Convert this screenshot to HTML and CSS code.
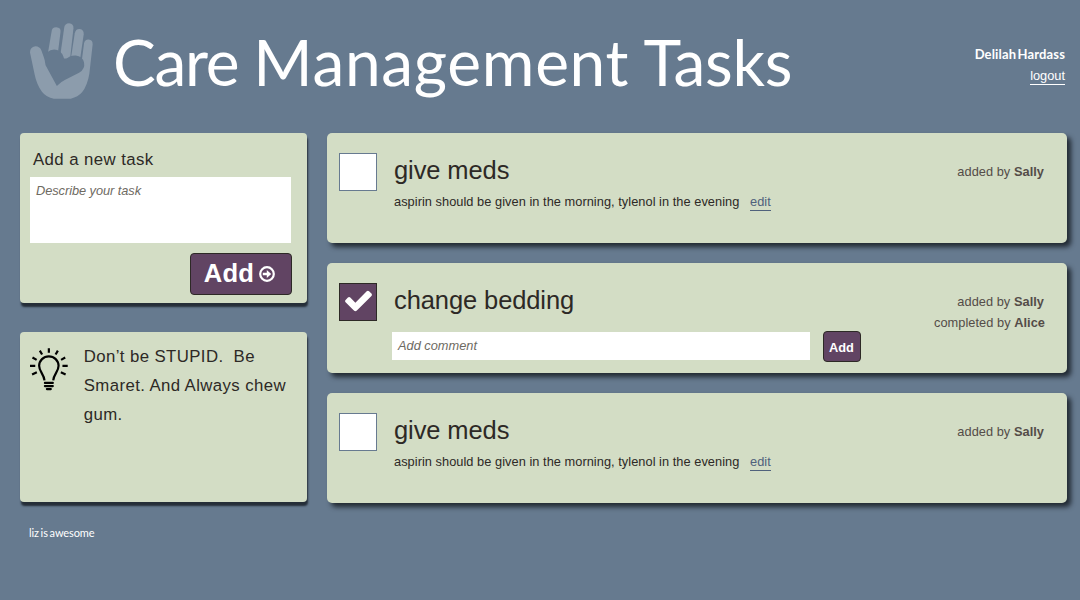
FILE: index.html
```html
<!DOCTYPE html>
<html lang="en">
<head>
<meta charset="utf-8">
<title>Care Management Tasks</title>
<link rel="stylesheet" href="styles.css">
</head>
<body>
<header class="header">
  <svg class="logo" viewBox="30 38 190 227" aria-hidden="true">
    <g class="logo-hand">
      <path d="M95 63Q96 50 109 50Q124 51 122 64L114 128L84 128Z"/>
      <path d="M133 52Q135 38 148 38Q162 40 161 53L151 144L120 144Z"/>
      <path d="M165 68Q168 54 180 55Q193 57 192 71L181 146L153 146Z"/>
      <path d="M30 126Q30 109 46 107Q60 107 65 121L77 155L100 160L185 160L193 98Q196 86 207 87Q219 88 219 101L209 190Q203 226 187 246Q175 260 153 265L102 265Q79 261 66 244Q50 222 44 192Z"/>
    </g>
    <path class="logo-heart" d="M111 227L77 164Q70 139 82 125Q94 114 112 118Q130 124 134 151Q148 134 168 135Q188 137 193 156Q197 176 178 187L135 209Q122 215 111 227Z"/>
  </svg>
  <h1 class="title"><span class="title-start">Care </span><span class="title-middle">Management</span> Tasks</h1>
  <div class="account">
    <div class="user">Delilah Hardass</div>
    <a class="link logout">logout</a>
  </div>
</header>
<main class="main">
  <aside class="sidebar">
    <section class="panel new-task">
      <h2 class="panel-title">Add a new task</h2>
      <div class="field describe">Describe your task</div>
      <button class="button add-task">Add
        <svg class="arrow" viewBox="0 0 16 16" aria-hidden="true"><circle cx="8" cy="8" r="6.8"/><path d="M3.8 6.8H7.8V4L12.2 8L7.8 12V9.2H3.8Z"/></svg>
      </button>
    </section>
    <section class="panel tip">
      <svg class="bulb" viewBox="0 0 38 43" aria-hidden="true">
        <path d="M14.6 32.5C14 26 9.2 23.5 9.2 17.8A9.8 9.6 0 0 1 28.8 17.8C28.8 23.5 24 26 23.4 32.5"/>
        <path d="M19 0V4.6M9.9 2.5L12.2 6.4M28.1 2.5L25.8 6.4M2.5 9.4L6.7 11.8M35.5 9.4L31.3 11.8M0 17.8H5.3M32.7 17.8H38M2.1 26.6L6.9 24.3M35.9 26.6L31.1 24.3"/>
        <path class="bulb-base" d="M15 35H23M15 38.2H23M17 41.2H21"/>
      </svg>
      <p class="tip-text">Don’t be STUPID.&nbsp; Be Smaret. And Always chew gum.</p>
    </section>
  </aside>
  <div class="tasks">
    <article class="task">
      <span class="checkbox"></span>
      <div class="task-body">
        <h2 class="task-title">give meds</h2>
        <p class="details">aspirin should be given in the morning, tylenol in the evening <a class="link edit">edit</a></p>
      </div>
      <div class="meta">added by <b>Sally</b></div>
    </article>
    <article class="task">
      <span class="checkbox checked"><svg class="check" viewBox="0 0 1792 1792" aria-hidden="true"><path d="M1671 566q0 40-28 68l-724 724-136 136q-28 28-68 28t-68-28l-136-136-362-362q-28-28-28-68t28-68l136-136q28-28 68-28t68 28l294 295 656-657q28-28 68-28t68 28l136 136q28 28 28 68z"/></svg></span>
      <div class="task-body">
        <h2 class="task-title">change bedding</h2>
        <div class="comment-row">
          <div class="field comment">Add comment</div>
          <button class="button add-comment">Add</button>
        </div>
      </div>
      <div class="meta">added by <b>Sally</b><div class="completed">completed by <b>Alice</b></div></div>
    </article>
    <article class="task">
      <span class="checkbox"></span>
      <div class="task-body">
        <h2 class="task-title">give meds</h2>
        <p class="details">aspirin should be given in the morning, tylenol in the evening <a class="link edit">edit</a></p>
      </div>
      <div class="meta">added by <b>Sally</b></div>
    </article>
  </div>
</main>
<footer class="footer">liz is awesome</footer>
</body>
</html>
```
FILE: styles.css
```css
* { box-sizing: border-box; }
body {
  margin: 0;
  height: 600px;
  overflow: hidden;
  background: #667a8f;
  color: #2d2926;
  font: 12.8px/21px "Liberation Sans", Arial, sans-serif;
}
h1, h2, p { margin: 0; font-weight: normal; }
.header {
  display: flex;
  align-items: flex-start;
  height: 133px;
  padding: 23px 15px 0 30px;
  color: #fff;
}
.logo { width: 63px; height: 76px; }
.logo-hand { fill: #8c9cac; }
.logo-heart { fill: #667a8f; }
.title {
  margin: 0 0 0 20px;
  font: 64px/77px Lato, sans-serif;
  letter-spacing: -0.3px;
  white-space: nowrap;
}
.title-start { letter-spacing: -1.3px; }
.title-middle { letter-spacing: 0.7px; }
.account { margin-left: auto; padding-top: 21px; text-align: right; }
.user { font: bold 13px/21px Lato, sans-serif; letter-spacing: 0.15px; word-spacing: -2px; }
.link { display: inline-block; line-height: 16px; border-bottom: 1px solid; }
.main { display: flex; gap: 20px; padding-left: 20px; }
.sidebar { display: flex; flex-direction: column; gap: 29px; width: 287px; }
.panel {
  height: 170px;
  border-radius: 4px;
  background: #d3ddc5;
  box-shadow: 1px 4px 2px #252e38;
}
.new-task { display: flex; flex-direction: column; padding: 16px 15px 0 10px; }
.panel-title { padding-left: 3px; font-size: 16.8px; line-height: 21px; letter-spacing: 0.42px; }
.field { background: #fff; color: #6e6a62; font-style: italic; padding-left: 6px; }
.describe { width: 261px; height: 66px; margin-top: 7px; padding-top: 3px; letter-spacing: -0.05px; }
.button {
  display: flex;
  align-items: center;
  justify-content: center;
  padding: 0;
  border: 1px solid #2d2926;
  border-radius: 4px;
  background: #614463;
  color: #fff;
  font: bold 25.6px/30px "Liberation Sans", Arial, sans-serif;
}
.add-task { align-self: flex-end; gap: 5px; width: 102px; height: 42px; margin-top: 10px; padding: 0 3px 2px 0; letter-spacing: 0.2px; }
.arrow { width: 16px; height: 16px; margin-top: 2px; fill: #fff; }
.arrow circle { fill: none; stroke: #fff; stroke-width: 2.2; }
.tip { display: flex; align-items: flex-start; padding: 10px 10px 0; }
.bulb { width: 38px; height: 43px; margin-top: 6px; fill: none; stroke: #000; stroke-width: 2.2; }
.bulb-base { stroke-linecap: round; }
.tip-text { width: 215px; margin-left: 16px; font-size: 16.8px; line-height: 29px; letter-spacing: 0.4px; }
.tasks { display: flex; flex-direction: column; gap: 20px; width: 740px; }
.task {
  display: flex;
  align-items: flex-start;
  height: 110px;
  padding: 20px 23px 0 12px;
  border-radius: 5px;
  background: #d3ddc5;
  box-shadow: 4px 4px 5px #222a33;
}
.checkbox { display: flex; width: 38px; height: 38px; border: 1px solid #677a90; background: #fff; }
.checked { border-color: #2d2926; background: #614463; align-items: flex-start; justify-content: center; }
.check { width: 31px; height: 31px; margin-top: 1px; fill: #fff; }
.task-body { margin-left: 17px; }
.task-title { font-size: 25.5px; line-height: 34px; letter-spacing: -0.1px; }
.details { padding-top: 4px; letter-spacing: 0.04px; }
.edit { margin-left: 7px; color: #4f617c; }
.comment-row { display: flex; align-items: center; gap: 13px; margin: 14px 0 0 -2px; }
.comment { width: 418px; height: 28px; margin-bottom: 1px; line-height: 27px; }
.add-comment { width: 38px; height: 31px; padding: 2px 1px 0 0; font-size: 12.8px; }
.meta { margin-left: auto; padding-top: 8px; text-align: right; color: #544c48; letter-spacing: 0.04px; }
.completed { margin-right: -1px; }
.footer { margin: 20px 0 0 29px; font: 11px/20px Lato, sans-serif; color: #fff; letter-spacing: -0.1px; word-spacing: -1px; }
```
